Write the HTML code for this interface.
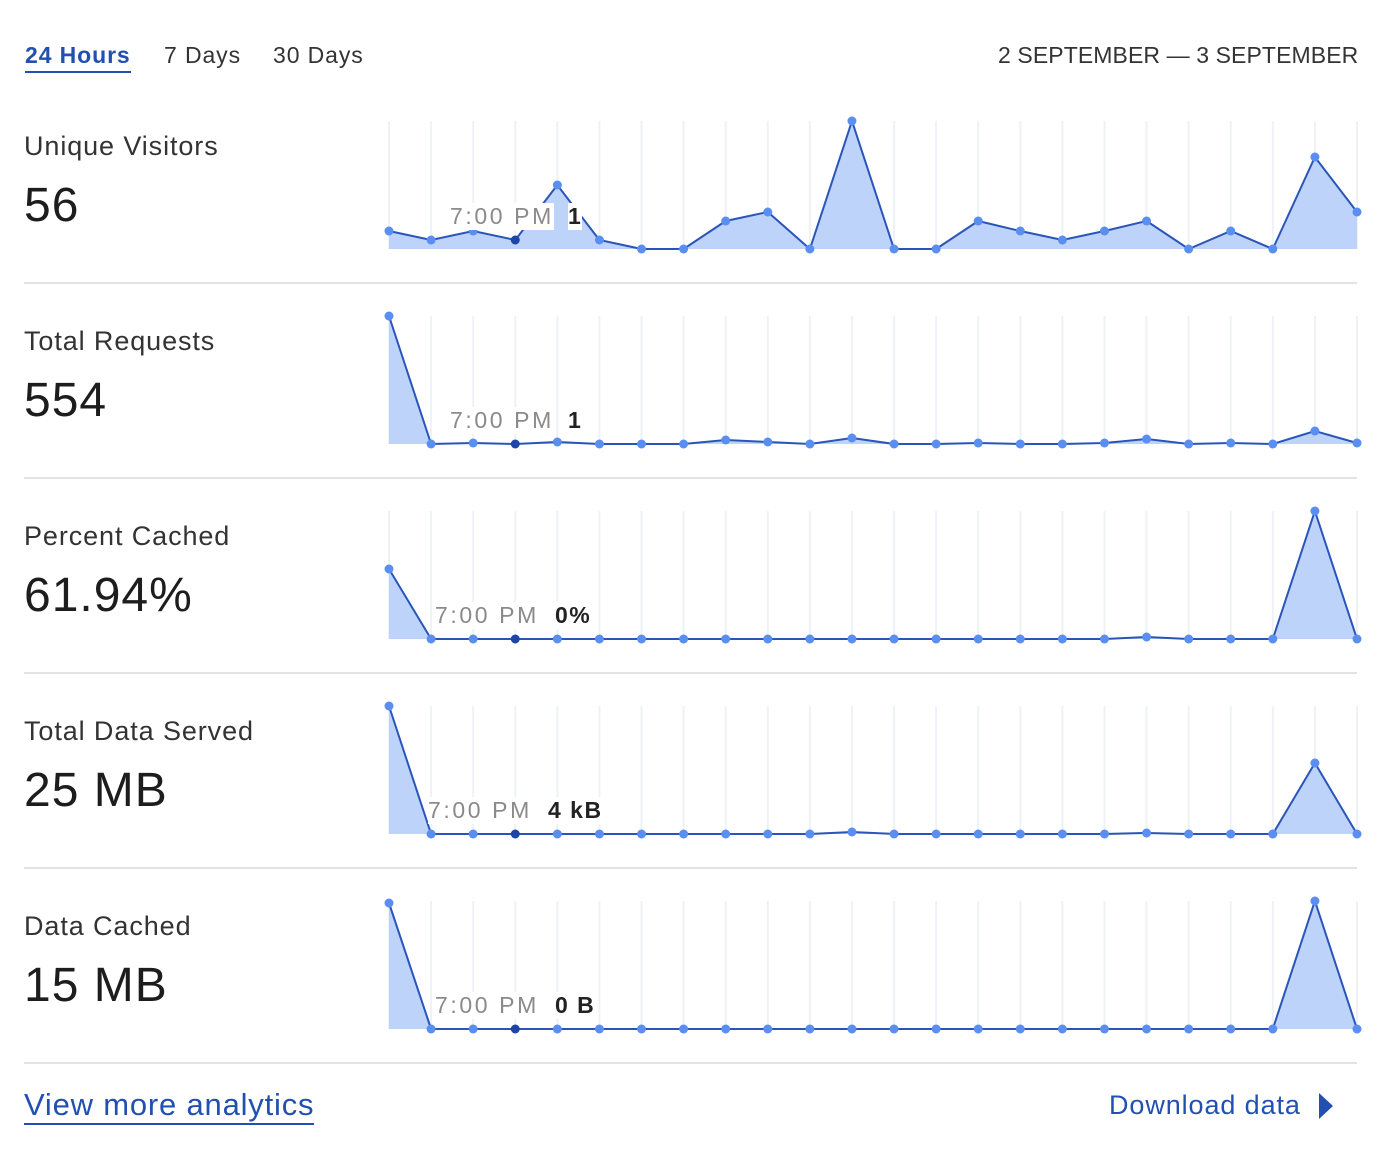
<!DOCTYPE html>
<html><head><meta charset="utf-8">
<style>
body{margin:0;width:1380px;height:1154px;background:#fff;font-family:"Liberation Sans",sans-serif;position:relative;overflow:hidden;color:#333}
.a{position:absolute;white-space:nowrap}
.tab{top:42px;font-size:23px;color:#333;letter-spacing:0.9px}
.lbl{font-size:27px;color:#333;left:24px;letter-spacing:0.9px}
.val{font-size:48px;color:#1d1d1d;left:24px;letter-spacing:1px}
.sep{position:absolute;left:24px;width:1333px;height:2px;background:#e2e2e2}
.tt{font-size:23px;color:#8a8a8a;background:#fff;letter-spacing:2.6px}
.tv{font-size:23px;color:#222;font-weight:bold;background:#fff;letter-spacing:1.5px}
svg{position:absolute;left:0;top:0}
</style></head><body>
<svg id="s" width="1380" height="1154"></svg>
<div class="a tab" style="left:25px;color:#2250b0;font-weight:bold;border-bottom:2px solid #2250b0;padding-bottom:2px">24 Hours</div>
<div class="a tab" style="left:164px">7 Days</div>
<div class="a tab" style="left:273px">30 Days</div>
<div class="a tab" style="left:998px;letter-spacing:0.1px">2 SEPTEMBER — 3 SEPTEMBER</div>

<div class="a lbl" style="top:131px">Unique Visitors</div>
<div class="a val" style="top:178px">56</div>
<div class="sep" style="top:282px"></div>
<div class="a lbl" style="top:326px">Total Requests</div>
<div class="a val" style="top:373px">554</div>
<div class="sep" style="top:477px"></div>
<div class="a lbl" style="top:521px">Percent Cached</div>
<div class="a val" style="top:568px">61.94%</div>
<div class="sep" style="top:672px"></div>
<div class="a lbl" style="top:716px">Total Data Served</div>
<div class="a val" style="top:763px">25 MB</div>
<div class="sep" style="top:867px"></div>
<div class="a lbl" style="top:911px">Data Cached</div>
<div class="a val" style="top:958px">15 MB</div>
<div class="sep" style="top:1062px"></div>

<div class="a tt" style="left:450px;top:203px">7:00 PM</div><div class="a tv" style="left:568px;top:203px">1</div>
<div class="a tt" style="left:450px;top:407px">7:00 PM</div><div class="a tv" style="left:568px;top:407px">1</div>
<div class="a tt" style="left:435px;top:602px">7:00 PM</div><div class="a tv" style="left:555px;top:602px">0%</div>
<div class="a tt" style="left:428px;top:797px">7:00 PM</div><div class="a tv" style="left:548px;top:797px">4 kB</div>
<div class="a tt" style="left:435px;top:992px">7:00 PM</div><div class="a tv" style="left:555px;top:992px">0 B</div>

<div class="a" style="left:24px;top:1087px;font-size:31px;color:#2250b0;border-bottom:2px solid #2250b0;line-height:36px;letter-spacing:0.8px">View more analytics</div>
<div class="a" style="left:1109px;top:1090px;font-size:27px;color:#2250b0;letter-spacing:0.9px">Download data</div>
<svg width="1380" height="1154" style="pointer-events:none"><path d="M1319 1093 L1333 1106 L1319 1119 Z" fill="#2250b0"/></svg>

<script>
var C=[
[121,249,[231,240,231,240,185,240,249,249,221,212,249,121,249,249,221,231,240,231,221,249,231,249,157,212]],
[316,444,[316,444,443,444,442,444,444,444,440,442,444,438,444,444,443,444,444,443,439,444,443,444,431,443]],
[511,639,[569,639,639,639,639,639,639,639,639,639,639,639,639,639,639,639,639,639,637,639,639,639,511,639]],
[706,834,[706,834,834,834,834,834,834,834,834,834,834,832,834,834,834,834,834,834,833,834,834,834,763,834]],
[901,1029,[903,1029,1029,1029,1029,1029,1029,1029,1029,1029,1029,1029,1029,1029,1029,1029,1029,1029,1029,1029,1029,1029,901,1029]]];
var h='';
C.forEach(function(c){
 var t=c[0],b=c[1],v=c[2],pts=[];
 for(var i=0;i<24;i++){var x=389+i*42.087;h+='<line x1="'+x+'" y1="'+t+'" x2="'+x+'" y2="'+b+'" stroke="#eef2f7" stroke-width="2"/>';pts.push(x.toFixed(1)+','+v[i]);}
 h+='<polygon points="389,'+b+' '+pts.join(' ')+' 1357,'+b+'" fill="#bdd3fa"/>';
 h+='<polyline points="'+pts.join(' ')+'" fill="none" stroke="#2a55b8" stroke-width="2"/>';
 for(var i=0;i<24;i++){var x=389+i*42.087;h+='<circle cx="'+x+'" cy="'+v[i]+'" r="4.5" fill="'+(i==3?'#1d45a8':'#5a8ef0')+'"/>';}
});
document.getElementById('s').innerHTML=h;
</script>
</body></html>
